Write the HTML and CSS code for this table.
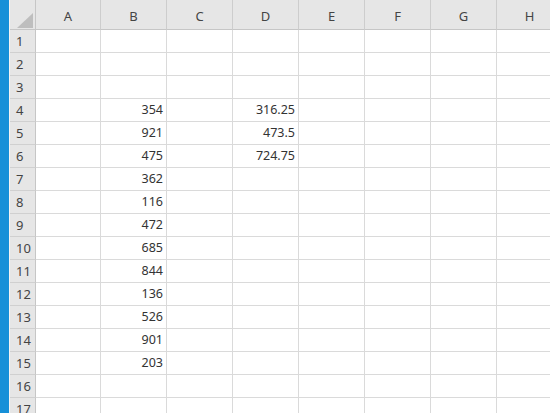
FILE: index.html
```html
<!DOCTYPE html>
<html lang="ja">
<head>
<meta charset="utf-8">
<title>Sheet</title>
<link rel="stylesheet" href="styles.css">
</head>
<body>
<div class="app">
  <div class="edge"></div>
  <div class="sheet">
    <div class="corner"><span class="tri"></span></div>
    <div class="ch">A</div><div class="ch">B</div><div class="ch">C</div><div class="ch">D</div><div class="ch">E</div><div class="ch">F</div><div class="ch">G</div><div class="ch">H</div>

    <div class="rh">1</div><div class="c"></div><div class="c"></div><div class="c"></div><div class="c"></div><div class="c"></div><div class="c"></div><div class="c"></div><div class="c"></div>
    <div class="rh">2</div><div class="c"></div><div class="c"></div><div class="c"></div><div class="c"></div><div class="c"></div><div class="c"></div><div class="c"></div><div class="c"></div>
    <div class="rh">3</div><div class="c"></div><div class="c"></div><div class="c"></div><div class="c"></div><div class="c"></div><div class="c"></div><div class="c"></div><div class="c"></div>
    <div class="rh">4</div><div class="c"></div><div class="c">354</div><div class="c"></div><div class="c">316.25</div><div class="c"></div><div class="c"></div><div class="c"></div><div class="c"></div>
    <div class="rh">5</div><div class="c"></div><div class="c">921</div><div class="c"></div><div class="c">473.5</div><div class="c"></div><div class="c"></div><div class="c"></div><div class="c"></div>
    <div class="rh">6</div><div class="c"></div><div class="c">475</div><div class="c"></div><div class="c">724.75</div><div class="c"></div><div class="c"></div><div class="c"></div><div class="c"></div>
    <div class="rh">7</div><div class="c"></div><div class="c">362</div><div class="c"></div><div class="c"></div><div class="c"></div><div class="c"></div><div class="c"></div><div class="c"></div>
    <div class="rh">8</div><div class="c"></div><div class="c">116</div><div class="c"></div><div class="c"></div><div class="c"></div><div class="c"></div><div class="c"></div><div class="c"></div>
    <div class="rh">9</div><div class="c"></div><div class="c">472</div><div class="c"></div><div class="c"></div><div class="c"></div><div class="c"></div><div class="c"></div><div class="c"></div>
    <div class="rh">10</div><div class="c"></div><div class="c">685</div><div class="c"></div><div class="c"></div><div class="c"></div><div class="c"></div><div class="c"></div><div class="c"></div>
    <div class="rh">11</div><div class="c"></div><div class="c">844</div><div class="c"></div><div class="c"></div><div class="c"></div><div class="c"></div><div class="c"></div><div class="c"></div>
    <div class="rh">12</div><div class="c"></div><div class="c">136</div><div class="c"></div><div class="c"></div><div class="c"></div><div class="c"></div><div class="c"></div><div class="c"></div>
    <div class="rh">13</div><div class="c"></div><div class="c">526</div><div class="c"></div><div class="c"></div><div class="c"></div><div class="c"></div><div class="c"></div><div class="c"></div>
    <div class="rh">14</div><div class="c"></div><div class="c">901</div><div class="c"></div><div class="c"></div><div class="c"></div><div class="c"></div><div class="c"></div><div class="c"></div>
    <div class="rh">15</div><div class="c"></div><div class="c">203</div><div class="c"></div><div class="c"></div><div class="c"></div><div class="c"></div><div class="c"></div><div class="c"></div>
    <div class="rh">16</div><div class="c"></div><div class="c"></div><div class="c"></div><div class="c"></div><div class="c"></div><div class="c"></div><div class="c"></div><div class="c"></div>
    <div class="rh">17</div><div class="c"></div><div class="c"></div><div class="c"></div><div class="c"></div><div class="c"></div><div class="c"></div><div class="c"></div><div class="c"></div>
  </div>
</div>
</body>
</html>
```

FILE: styles.css
```css
html, body {
  margin: 0;
  padding: 0;
  background: #ffffff;
  overflow: hidden;
  width: 550px;
  height: 413px;
}

.app {
  display: flex;
  align-items: flex-start;
  height: 413px;
  font-family: "Noto Sans", "Noto Sans CJK JP", sans-serif;
  font-size: 12.5px;
}

.edge {
  flex: 0 0 9px;
  height: 100%;
  background: #1690d8;
  border-right: 1px solid #f3f3f3;
}

.sheet {
  flex: 0 0 auto;
  display: grid;
  grid-template-columns: 26px 65px repeat(7, 66px);
  grid-template-rows: 30px;
  grid-auto-rows: 23px;
}

.sheet > div {
  box-sizing: border-box;
  border-right: 1px solid #dadada;
  border-bottom: 1px solid #dadada;
  line-height: 1;
}

.corner {
  background: #e6e6e6;
  position: relative;
  border-right-color: #c6c6c6 !important;
  border-bottom-color: #c6c6c6 !important;
}

.tri {
  position: absolute;
  right: 2px;
  bottom: 1px;
  width: 0;
  height: 0;
  border-left: 16px solid transparent;
  border-bottom: 15px solid #bebebe;
}

.ch {
  background: #e6e6e6;
  color: #444444;
  font-size: 13px;
  display: flex;
  justify-content: center;
  align-items: flex-end;
  padding-bottom: 6px;
  border-right-color: #cdcdcd !important;
  border-bottom-color: #c6c6c6 !important;
}

.rh {
  background: #e6e6e6;
  color: #444444;
  font-size: 13px;
  display: flex;
  align-items: center;
  padding-left: 6px;
  border-right-color: #c6c6c6 !important;
  border-bottom-color: #d0d0d0 !important;
}

.c {
  color: #333333;
  display: flex;
  align-items: center;
  justify-content: flex-end;
  padding-right: 3px;
}
```
